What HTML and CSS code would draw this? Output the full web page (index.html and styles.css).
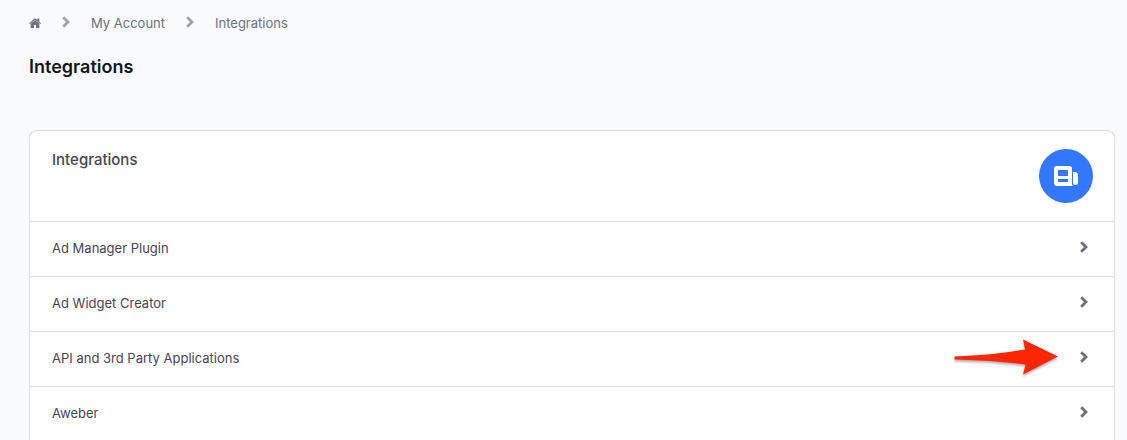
FILE: index.html
```html
<!DOCTYPE html>
<html lang="en">
<head>
    <meta charset="UTF-8">
    <meta name="viewport" content="width=device-width, initial-scale=1.0">
    <title>Integrations</title>
    <link rel="stylesheet" href="styles.css">
</head>
<body>
    <!-- Shared chevron shape -->
    <svg class="sprite" aria-hidden="true">
        <symbol id="chevron" viewBox="0 0 8 12">
            <path d="M1.2 1.2 L6 6 L1.2 10.8" fill="none" stroke="currentColor" stroke-width="2.8"/>
        </symbol>
    </svg>

    <nav class="breadcrumb" aria-label="Breadcrumb">
        <a href="/" aria-label="Home">
            <svg class="home-icon" viewBox="0 0 12 10" aria-hidden="true">
                <path d="M6 2.2 L10.4 5.8 V9.4 Q10.4 10 9.8 10 H7 V7 H5 V10 H2.2 Q1.6 10 1.6 9.4 V5.8 Z M0 5.2 L5.5 0.5 Q6 0.1 6.5 0.5 L8.4 2.1 V0.4 H10.3 V3.7 L12 5.2 L11.3 6.1 L6 1.7 L0.7 6.1 Z" fill="currentColor"/>
            </svg>
        </a>
        <svg class="chevron" aria-hidden="true"><use href="#chevron"/></svg>
        <a href="/account">My Account</a>
        <svg class="chevron" aria-hidden="true"><use href="#chevron"/></svg>
        <a href="/account/integrations">Integrations</a>
    </nav>

    <h1 class="page-title">Integrations</h1>

    <main class="card">
        <div class="card-header">
            <h2>Integrations</h2>
            <span class="card-icon">
                <svg viewBox="0 0 24 20" aria-hidden="true">
                    <path d="M2.5 0 H15.5 Q18 0 18 2.5 V17.5 Q18 19 19 20 H3 Q0 20 0 17 V2.5 Q0 0 2.5 0 Z M4 4 V10 H14 V4 Z M4 13 V16 H14 V13 Z" fill="#fff" fill-rule="evenodd"/>
                    <path d="M19 6 H20.5 Q24 6 24 9.5 V16.5 Q24 19 21.5 19 Q19 19 19 16.5 Z" fill="#fff"/>
                </svg>
            </span>
        </div>
        <ul class="integration-list">
            <li>
                <a href="/integrations/ad-manager-plugin">Ad Manager Plugin
                    <svg class="chevron" aria-hidden="true"><use href="#chevron"/></svg>
                </a>
            </li>
            <li>
                <a href="/integrations/ad-widget-creator">Ad Widget Creator
                    <svg class="chevron" aria-hidden="true"><use href="#chevron"/></svg>
                </a>
            </li>
            <li>
                <a href="/integrations/api">API and 3rd Party Applications
                    <svg class="chevron" aria-hidden="true"><use href="#chevron"/></svg>
                </a>
                <svg class="pointer" viewBox="0 0 106 40" aria-hidden="true">
                    <path d="M0.5 17.5 Q40 16 71 10.5 L69 0.5 L104 17.5 L69 35.5 L71.5 25.5 Q40 21.5 0.5 20.5 Z" fill="#ff2600"/>
                </svg>
            </li>
            <li>
                <a href="/integrations/aweber">Aweber
                    <svg class="chevron" aria-hidden="true"><use href="#chevron"/></svg>
                </a>
            </li>
        </ul>
    </main>
</body>
</html>
```
FILE: styles.css
```css
/* Global Styles */
* {
    box-sizing: border-box;
}

body {
    margin: 0;
    padding: 13px 12px 0 29px;
    background-color: #f9fafc;
    color: #4a4357;
    font-family: Inter, sans-serif;
    font-size: 13px;
    line-height: 20px;
}

a {
    color: inherit;
    text-decoration: none;
}

a:hover {
    color: #3377ff;
}

.sprite {
    position: absolute;
    width: 0;
    height: 0;
}

.chevron {
    width: 8px;
    height: 12px;
    flex: none;
    color: #6d6d80;
}

/* Breadcrumb */
.breadcrumb {
    display: flex;
    align-items: center;
    gap: 21px;
    color: #6b7280;
}

.breadcrumb .chevron {
    color: #9ca3af;
    margin-bottom: 3px;
}

.home-icon {
    display: block;
    width: 12px;
    height: 10px;
}

.page-title {
    margin: 20px 0 50px;
    color: #12151c;
    font-size: 18px;
    font-weight: 600;
    line-height: 27px;
}

/* Card */
.card {
    background-color: #fff;
    border: 1px solid #dddfe3;
    border-bottom: none;
    border-radius: 8px 8px 0 0;
}

.card-header {
    display: flex;
    justify-content: space-between;
    align-items: flex-start;
    padding: 18px 21px 18px 22px;
}

.card-header h2 {
    margin: 0;
    font-size: 15px;
    font-weight: 500;
    line-height: 22px;
}

.card-icon {
    display: flex;
    justify-content: center;
    align-items: center;
    width: 54px;
    height: 54px;
    border-radius: 50%;
    background-color: #3377ff;
}

.card-icon svg {
    width: 24px;
    height: 20px;
}

/* List */
.integration-list {
    margin: 0;
    padding: 0;
    list-style: none;
}

.integration-list li {
    position: relative;
    border-top: 1px solid #dddfe3;
}

.integration-list a {
    display: flex;
    justify-content: space-between;
    align-items: center;
    padding: 16px 26px 18px 22px;
}

.integration-list .chevron {
    margin-bottom: 3px;
}

/* Red arrow lying over the row */
.pointer {
    position: absolute;
    top: 7px;
    right: 54px;
    width: 106px;
    height: 40px;
    pointer-events: none;
    filter: drop-shadow(0 2px 1px rgba(0, 0, 0, 0.3));
}
```
